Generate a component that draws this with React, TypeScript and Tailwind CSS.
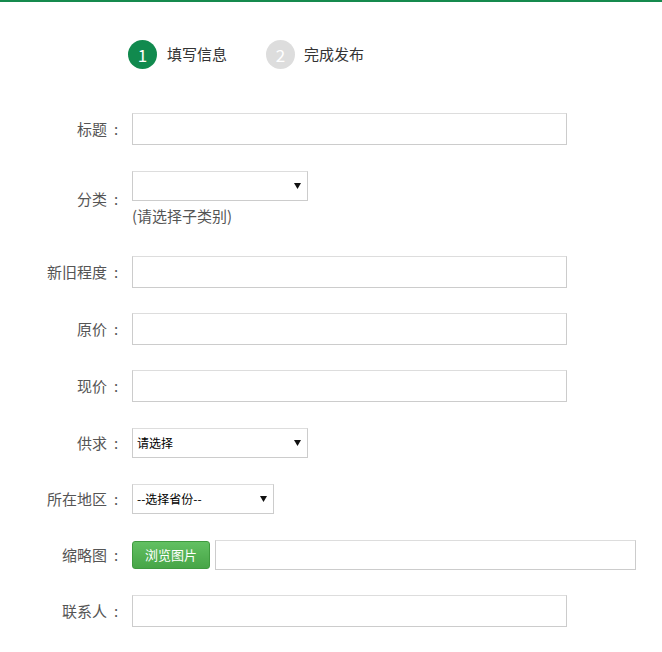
import React from "react";

const font = { fontFamily: '"Noto Sans CJK SC", "Liberation Sans", sans-serif' };

const Arrow = () => (
  <svg
    className="pointer-events-none absolute right-[7px] top-1/2 -mt-[3px]"
    width="7"
    height="6"
    viewBox="0 0 7 6"
  >
    <path d="M0 0h7L3.5 6z" fill="#111" />
  </svg>
);

const Label = ({ text }: { text: string }) => (
  <div className="text-right text-[15px] text-[#555]">
    {text}
    <span className="inline-block w-[14px] pl-[7px] text-left">:</span>
  </div>
);

const TextInput = ({ w = "w-[435px]", h = "h-[32px]" }: { w?: string; h?: string }) => (
  <input
    type="text"
    className={`${w} ${h} border border-[#ccc] border-t-[#ddd] bg-white px-2 text-[13px] outline-none`}
  />
);

const Select = ({ w, text }: { w: string; text?: string }) => (
  <div className={`relative ${w}`}>
    <select
      className="h-[30px] w-full appearance-none border border-[#ccc] border-t-[#ddd] bg-white pl-[4px] text-[12px] text-black outline-none"
      defaultValue="a"
    >
      <option value="a">{text ?? ""}</option>
    </select>
    <Arrow />
  </div>
);

export default function App() {
  return (
    <div className="h-[652px] w-[662px] bg-white" style={font}>
      <div className="h-[2px] bg-[#158a4e]" />

      <div className="flex items-center pl-[128px] pt-[38px]">
        <div className="flex h-[29px] w-[29px] items-center justify-center rounded-full bg-[#118a4e] text-[17px] text-white">
          1
        </div>
        <span className="ml-[10px] text-[15px] text-[#333]">填写信息</span>
        <div className="ml-[39px] flex h-[29px] w-[29px] items-center justify-center rounded-full bg-[#dddddd] text-[17px] text-white">
          2
        </div>
        <span className="ml-[9px] text-[15px] text-[#333]">完成发布</span>
      </div>

      <div className="mt-[44px] grid grid-cols-[121px_1fr] items-center gap-x-[11px]">
        <Label text="标题" />
        <TextInput />

        <div className="col-span-2 h-[26px]" />
        <Label text="分类" />
        <div className="flex flex-col">
          <Select w="w-[176px]" />
          <span className="mt-[4px] text-[15px] leading-[22px] text-[#555]">(请选择子类别)</span>
        </div>

        <div className="col-span-2 h-[29px]" />
        <Label text="新旧程度" />
        <TextInput />

        <div className="col-span-2 h-[25px]" />
        <Label text="原价" />
        <TextInput />

        <div className="col-span-2 h-[25px]" />
        <Label text="现价" />
        <TextInput />

        <div className="col-span-2 h-[26px]" />
        <Label text="供求" />
        <Select w="w-[176px]" text="请选择" />

        <div className="col-span-2 h-[26px]" />
        <Label text="所在地区" />
        <Select w="w-[142px]" text="--选择省份--" />

        <div className="col-span-2 h-[26px]" />
        <Label text="缩略图" />
        <div className="flex items-center gap-[5px]">
          <button className="h-[28px] w-[78px] rounded-[3px] border border-[#3f9a3f] bg-gradient-to-b from-[#62c062] to-[#47a547] text-[13px] text-white">
            浏览图片
          </button>
          <TextInput w="w-[421px]" h="h-[30px]" />
        </div>

        <div className="col-span-2 h-[25px]" />
        <Label text="联系人" />
        <TextInput />
      </div>
    </div>
  );
}
